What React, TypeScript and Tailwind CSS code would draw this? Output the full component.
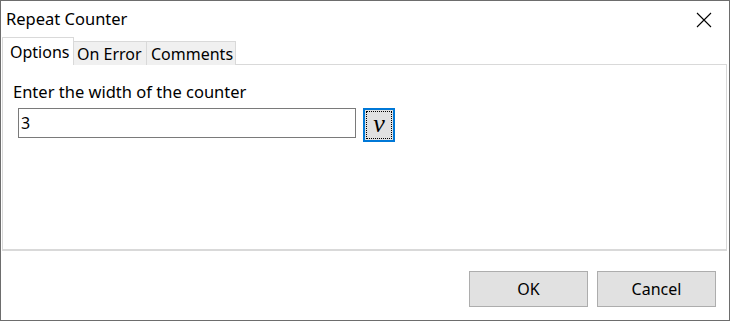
export default function App() {
  const font = { fontFamily: '"Noto Sans", "Open Sans", sans-serif' };
  return (
    <div
      className="w-[730px] h-[321px] bg-white border border-[#6d6d6d] flex flex-col text-[#000] overflow-hidden"
      style={font}
    >
      {/* title bar */}
      <div className="h-[36px] flex items-center justify-between pl-[5px] pr-[17px] shrink-0">
        <span className="text-[16.5px] leading-none">Repeat Counter</span>
        <svg width="16" height="16" viewBox="0 0 16 16" className="mt-[1px]">
          <path d="M1 1 L15 15 M15 1 L1 15" stroke="#000" strokeWidth="1.1" fill="none" />
        </svg>
      </div>

      {/* tabs */}
      <div className="flex items-end pl-[1px] h-[28px] shrink-0 relative z-10">
        <div className="w-[72px] h-[28px] pl-[7px] bg-white border border-b-0 border-[#d9d9d9] flex items-center text-[16px] pt-[1px]">
          Options
        </div>
        <div className="w-[73px] h-[24px] pl-[3px] bg-[#f0f0f0] border border-l-0 border-b-0 border-[#d9d9d9] flex items-center text-[16px]">
          On Error
        </div>
        <div className="w-[89px] h-[24px] pl-[4px] bg-[#f0f0f0] border border-l-0 border-b-0 border-[#d9d9d9] flex items-center text-[16px]">
          Comments
        </div>
      </div>

      {/* panel */}
      <div className="h-[187px] mx-[1px] mr-[2px] border border-[#d9d9d9] border-b-2 bg-white -mt-[1px] pl-[10px] pt-[16px] shrink-0">
        <div className="text-[16.5px] leading-[22px]">Enter the width of the counter</div>
        <div className="flex items-start gap-[7px] mt-[5px] pl-[5px]">
          <div className="w-[338px] h-[30px] border border-[#7a7a7a] flex items-center pl-[2px] text-[16px]">
            3
          </div>
          <div className="w-[32px] h-[34px] border-2 border-[#0078d7] bg-[#e1e1e1] p-[1px]">
            <div className="w-full h-full border border-dotted border-black flex items-center justify-center">
              <span
                className="italic text-[26px] leading-none -mt-[3px]"
                style={{ fontFamily: '"Liberation Serif", serif' }}
              >
                v
              </span>
            </div>
          </div>
        </div>
      </div>

      {/* footer */}
      <div className="flex-1 flex justify-end items-start gap-[9px] pt-[20px] pr-[13px]">
        <div className="w-[119px] h-[36px] bg-[#e1e1e1] border border-[#adadad] flex items-center justify-center text-[16px]">
          OK
        </div>
        <div className="w-[119px] h-[36px] bg-[#e1e1e1] border border-[#adadad] flex items-center justify-center text-[16px]">
          Cancel
        </div>
      </div>
    </div>
  );
}
